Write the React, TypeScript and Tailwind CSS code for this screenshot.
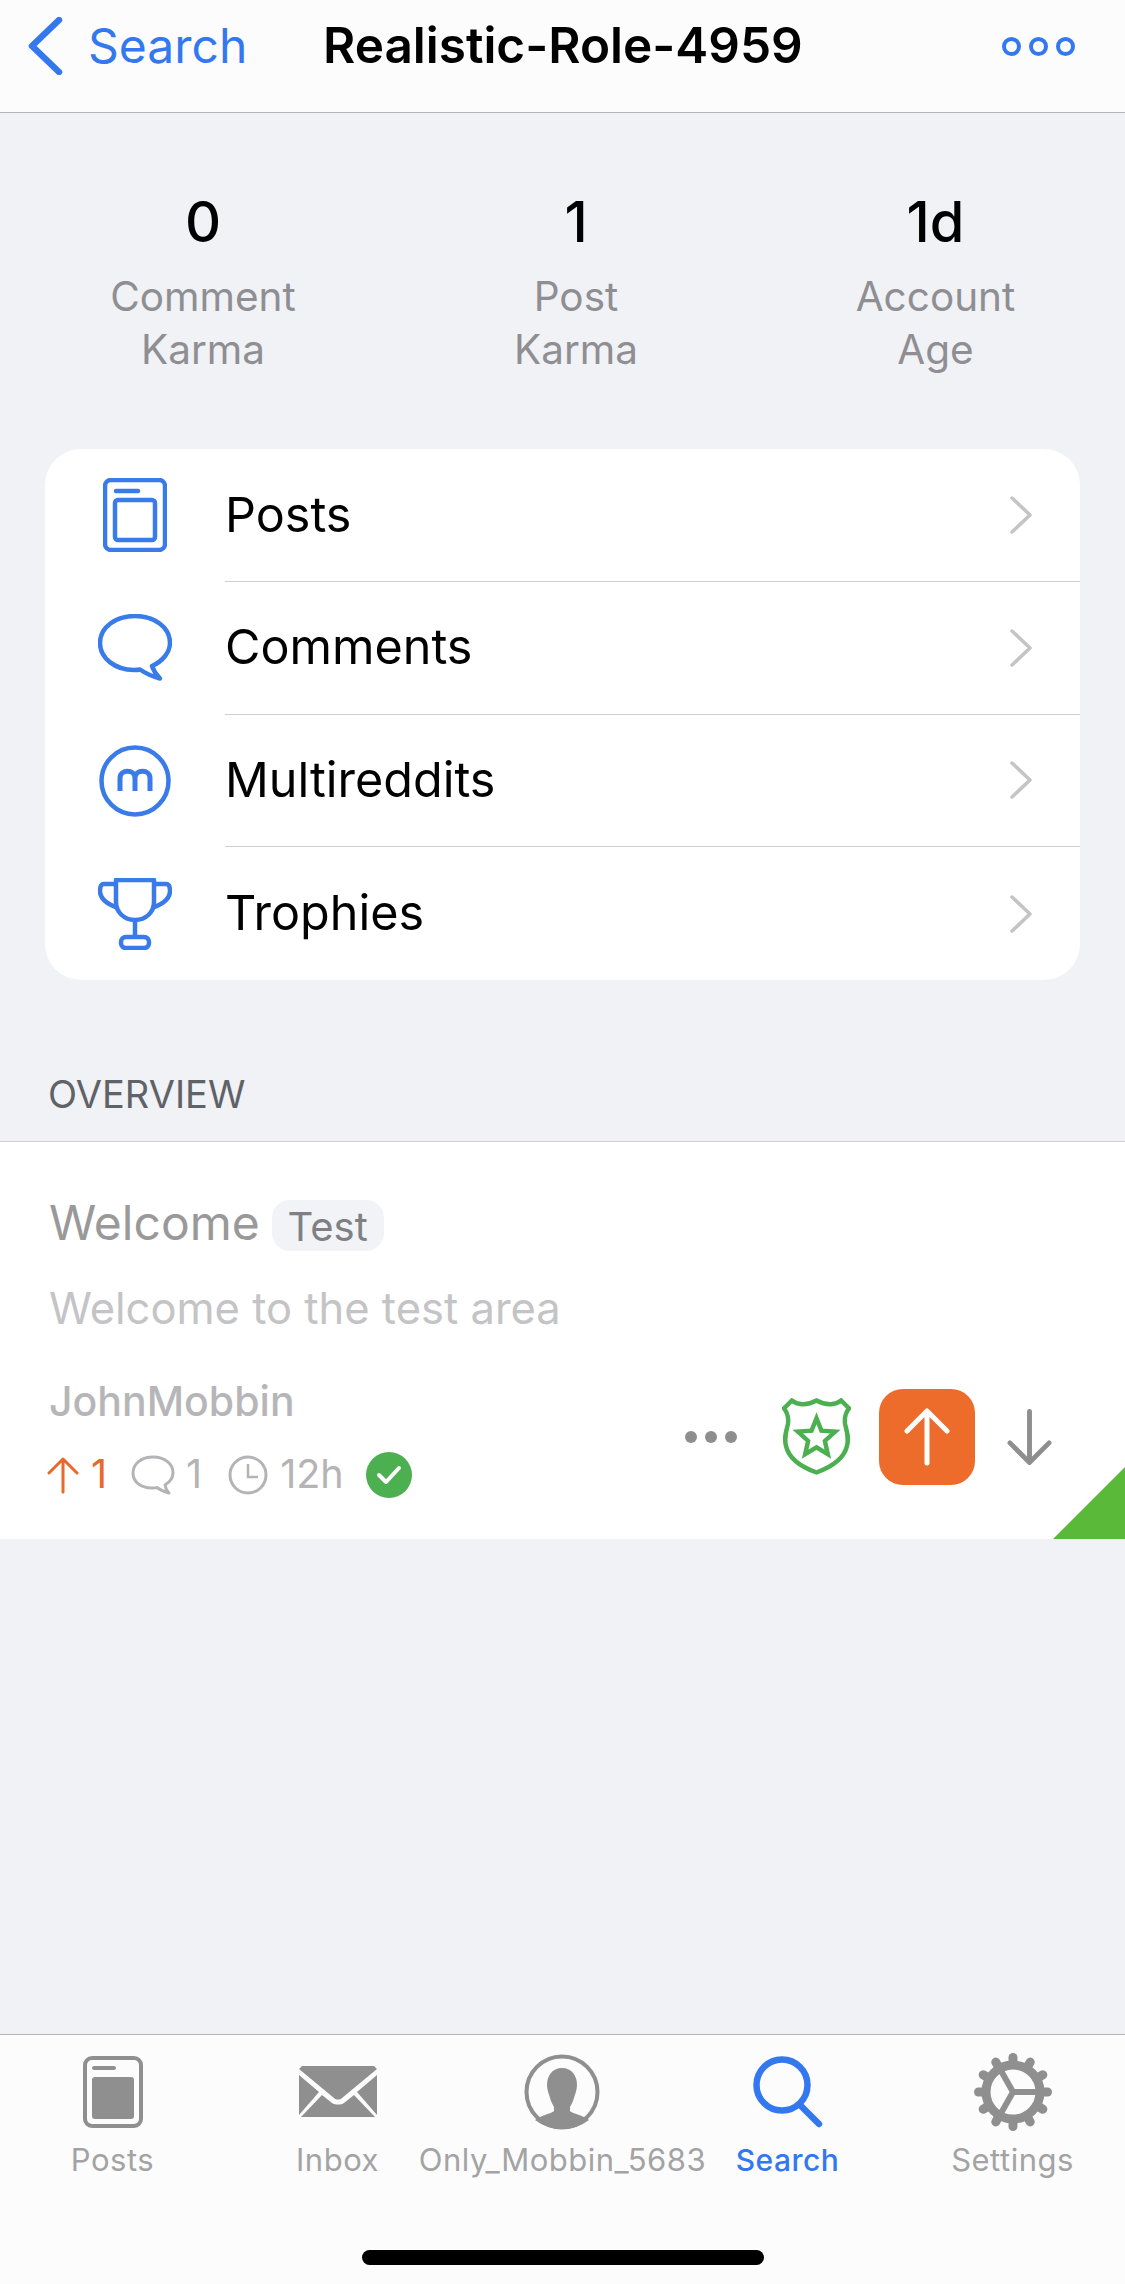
import type { ReactNode } from "react";

const font = "font-['Inter','Liberation_Sans',sans-serif]";

function PostsIcon() {
  return (
    <svg width="64" height="74" viewBox="0 0 64 74" fill="none" stroke="#3a7bea" strokeWidth="4.500">
      <rect x="2" y="2" width="60" height="70" rx="6" />
      <rect x="12" y="22" width="40" height="40" rx="3" />
      <path d="M13 13h22" strokeLinecap="round" />
    </svg>
  );
}

function CommentIcon() {
  return (
    <svg width="74" height="68" viewBox="0 0 74 68" fill="none" stroke="#3a7bea" strokeWidth="4.500">
      <path
        d="M37 2C18 2 2 13 2 29c0 15 15 27 34 27 3 0 4 0 6-.5 5 3.500 11 6.500 20 9-4-4-6.500-8-8-12.500C65 47 72 38 72 29 72 13 56 2 37 2Z"
        strokeLinejoin="round"
      />
    </svg>
  );
}

function MultiIcon() {
  return (
    <svg width="72" height="72" viewBox="0 0 72 72" fill="none" stroke="#3a7bea">
      <circle cx="36" cy="36" r="33.500" strokeWidth="4.500" />
      <path d="M21 46V33c0-9 15-9 15 0v13M36 33c0-9 15-9 15 0v13" strokeWidth="5" />
    </svg>
  );
}

function TrophyIcon() {
  return (
    <svg width="74" height="72" viewBox="0 0 74 72" fill="none" stroke="#3a7bea" strokeWidth="4.500" strokeLinejoin="round">
      <path d="M18 2h38v22c0 10-8 18-19 18s-19-8-19-18V2Z" />
      <path d="M18 6H6C2 6 2 10 2 13c0 8 7 13 18 17M56 6h12c4 0 4 4 4 7 0 8-7 13-18 17" />
      <path d="M37 42v17" />
      <rect x="23" y="59" width="28" height="11" rx="5" />
    </svg>
  );
}

function Chevron() {
  return (
    <svg width="24" height="40" viewBox="0 0 24 40" fill="none" stroke="#c4c4c7" strokeWidth="3.500" strokeLinecap="round" strokeLinejoin="round">
      <path d="M3 3l18 17L3 37" />
    </svg>
  );
}

function Row({ icon, label, last }: { icon: ReactNode; label: string; last?: boolean }) {
  return (
    <div className="flex h-[133px] items-stretch">
      <div className="flex w-[180px] shrink-0 items-center justify-center">{icon}</div>
      <div className={`flex flex-1 items-center justify-between pr-[47px] ${last ? "" : "border-b border-[#cfcfd2]"}`}>
        <span className="text-[48.500px] leading-none text-black">{label}</span>
        <Chevron />
      </div>
    </div>
  );
}

function Stat({ value, lines }: { value: string; lines: string[] }) {
  return (
    <div className="flex flex-col items-center">
      <div className="h-[60px] text-[56px] font-medium leading-[60px] text-black">{value}</div>
      <div className="mt-[18px] text-center text-[40.500px] leading-[53px] text-[#8e8e93]">
        {lines.map((l) => (
          <div key={l}>{l}</div>
        ))}
      </div>
    </div>
  );
}

function Tab({ icon, label, active }: { icon: ReactNode; label: string; active?: boolean }) {
  return (
    <div className="flex flex-col items-center">
      <div className="flex h-[80px] items-center justify-center">{icon}</div>
      <span
        className={`mt-[10px] whitespace-nowrap leading-[36px] ${
          active ? "text-[30px] font-medium tracking-[0.5px] text-[#3478f0]" : "text-[31px] tracking-[0.5px] text-[#a3a3a3]"
        }`}
      >
        {label}
      </span>
    </div>
  );
}

function GearIcon() {
  const teeth = [0, 30, 60, 90, 120, 150, 180, 210, 240, 270, 300, 330];
  return (
    <svg width="80" height="80" viewBox="0 0 80 80" fill="none">
      {teeth.map((a) => (
        <rect key={a} x="35.500" y="1" width="9" height="16" rx="4.500" fill="#8f8f8f" transform={`rotate(${a} 40 40)`} />
      ))}
      <circle cx="40" cy="40" r="27" stroke="#8f8f8f" strokeWidth="9" />
      <path d="M40 40h26M40 40L27 17M40 40L27 63" stroke="#8f8f8f" strokeWidth="6" />
    </svg>
  );
}

export default function App() {
  return (
    <div className={`flex h-[2284px] w-[1125px] flex-col overflow-hidden bg-[#f1f2f6] ${font}`}>
      {/* nav bar */}
      <header className="flex h-[113px] shrink-0 items-start border-b border-[#b4b4b6] bg-[#fcfcfd]">
        <div className="flex h-[92px] w-full items-center">
          <svg className="ml-[27px]" width="36" height="58" viewBox="0 0 36 58" fill="none" stroke="#3478f0" strokeWidth="6.500" strokeLinecap="round" strokeLinejoin="round">
            <path d="M32 3L5 29l27 26" />
          </svg>
          <span className="ml-[25px] w-[235px] text-[48px] leading-none text-[#3478f0]">Search</span>
          <span className="whitespace-nowrap text-[49.500px] font-semibold leading-none text-black">Realistic-Role-4959</span>
          <div className="ml-auto mr-[50px] flex gap-[8px]">
            <span className="h-[19px] w-[19px] rounded-full border-[4px] border-[#3478f0]" />
            <span className="h-[19px] w-[19px] rounded-full border-[4px] border-[#3478f0]" />
            <span className="h-[19px] w-[19px] rounded-full border-[4px] border-[#3478f0]" />
          </div>
        </div>
      </header>

      {/* stats */}
      <section className="grid shrink-0 grid-cols-[406px_340px_379px] pt-[79px]">
        <Stat value="0" lines={["Comment", "Karma"]} />
        <Stat value="1" lines={["Post", "Karma"]} />
        <Stat value="1d" lines={["Account", "Age"]} />
      </section>

      {/* menu card */}
      <section className="mx-[45px] mt-[73px] flex h-[531px] shrink-0 flex-col overflow-hidden rounded-[36px] bg-white">
        <Row icon={<PostsIcon />} label="Posts" />
        <Row icon={<CommentIcon />} label="Comments" />
        <Row icon={<MultiIcon />} label="Multireddits" />
        <Row icon={<TrophyIcon />} label="Trophies" last />
      </section>

      <div className="shrink-0 border-b border-[#cfcfd2] pb-[24px] pl-[48px] pt-[91px] text-[38px] leading-[46px] text-[#5f6266]">
        OVERVIEW
      </div>

      {/* post */}
      <article className="relative flex h-[397px] shrink-0 justify-between overflow-hidden bg-white pl-[49px]">
        <div className="flex flex-col pt-[58px]">
          <div className="flex h-[51px] items-center gap-[12px]">
            <span className="-mt-[6px] text-[48px] leading-none text-[#999999]">Welcome</span>
            <span className="flex h-[51px] w-[112px] items-center justify-center rounded-[18px] bg-[#f2f3f6] pt-[2px] text-[40px] leading-none text-[#808084]">
              Test
            </span>
          </div>
          <p className="mt-[34px] whitespace-nowrap text-[43.500px] leading-[46px] text-[#c4c4c6]">Welcome to the test area</p>
          <p className="mt-[45px] text-[41px] font-medium leading-[50px] text-[#b6b6b8]">JohnMobbin</p>
          <div className="mt-[26px] flex h-[46px] items-center text-[39.500px] leading-none text-[#b4b4b6]">
            <svg className="-ml-[2px]" width="32" height="38" viewBox="0 0 32 38" fill="none" stroke="#e8692b" strokeWidth="3" strokeLinecap="round" strokeLinejoin="round">
              <path d="M16 36V3M2 17L16 3l14 14" />
            </svg>
            <span className="ml-[12px] text-[#e8692b]">1</span>
            <svg className="ml-[24px]" width="44" height="40" viewBox="0 0 44 40" fill="none" stroke="#b4b4b6" strokeWidth="3">
              <path d="M22 2C10 2 2 9 2 18c0 9 8 15 19 15 2 0 4 0 5-.5 3 2.500 7 4 12 5.500-2-2-3.500-5-4-8 5-3 8-7 8-12.500C42 9 34 2 22 2Z" strokeLinejoin="round" />
            </svg>
            <span className="ml-[11px]">1</span>
            <svg className="ml-[26px]" width="40" height="40" viewBox="0 0 40 40" fill="none" stroke="#b4b4b6" strokeWidth="3">
              <circle cx="20" cy="20" r="18" />
              <path d="M20 9v13h10" strokeWidth="2.500" />
            </svg>
            <span className="ml-[12px]">12h</span>
            <span className="ml-[22px] flex h-[46px] w-[46px] items-center justify-center rounded-full bg-[#4caf50]">
              <svg width="26" height="20" viewBox="0 0 26 20" fill="none" stroke="#ffffff" strokeWidth="4" strokeLinecap="round" strokeLinejoin="round">
                <path d="M3 10l7 7L23 3" />
              </svg>
            </span>
          </div>
        </div>

        <div className="flex items-center self-end pb-[54px] pr-[73px]">
          <div className="flex gap-[8px]">
            <span className="h-[12px] w-[12px] rounded-full bg-[#8e8e8e]" />
            <span className="h-[12px] w-[12px] rounded-full bg-[#8e8e8e]" />
            <span className="h-[12px] w-[12px] rounded-full bg-[#8e8e8e]" />
          </div>
          <svg className="ml-[45px]" width="69" height="78" viewBox="0 0 70 78" fill="none" stroke="#4caf50" strokeWidth="4.500">
            <path d="M10 2L2 10c4 5 5 9 4 16-2 8-4 14-2 22 3 13 17 22 31 27 14-5 28-14 31-27 2-8 0-14-2-22-1-7 0-11 4-16l-8-8c-5 4-14 6-25 0C24 8 15 6 10 2Z" strokeLinejoin="miter" />
            <path d="M35 20l5 12.500L54 33.500 43.500 43l3 13.500L35 49.500 23.500 56.500l3-13.500L16 33.500l14-1Z" strokeWidth="4.500" />
          </svg>
          <div className="ml-[28px] flex h-[96px] w-[96px] items-center justify-center rounded-[24px] bg-[#ed6c2c]">
            <svg width="46" height="58" viewBox="0 0 46 58" fill="none" stroke="#ffffff" strokeWidth="5" strokeLinecap="round" strokeLinejoin="round">
              <path d="M23 55V3M3 23L23 3l20 20" />
            </svg>
          </div>
          <svg className="ml-[32px]" width="45" height="58" viewBox="0 0 46 58" fill="none" stroke="#8e8e8e" strokeWidth="5" strokeLinecap="round" strokeLinejoin="round">
            <path d="M23 3v52M3 35l20 20 20-20" />
          </svg>
        </div>

        {/* corner flag */}
        <div className="absolute bottom-0 right-0 h-[72px] w-[72px] bg-[#5ab938] [clip-path:polygon(100%_0,100%_100%,0_100%)]" />
      </article>

      <div className="flex-1" />

      {/* tab bar */}
      <footer className="flex h-[250px] shrink-0 flex-col border-t border-[#b4b4b6] bg-[#fcfcfc]">
        <nav className="grid grid-cols-5 pt-[17px]">
          <Tab
            label="Posts"
            icon={
              <svg width="60" height="72" viewBox="0 0 60 72" fill="none">
                <rect x="2" y="2" width="56" height="68" rx="7" stroke="#8f8f8f" strokeWidth="4" />
                <rect x="9" y="21" width="42" height="42" rx="3" fill="#8f8f8f" />
                <path d="M11 12h20" stroke="#8f8f8f" strokeWidth="4" strokeLinecap="round" />
              </svg>
            }
          />
          <Tab
            label="Inbox"
            icon={
              <svg width="78" height="52" viewBox="0 0 78 52" fill="#8f8f8f">
                <path d="M3 0h72l3 3-35 29c-2 2-6 2-8 0L0 3Z" />
                <path d="M0 9l20 17L0 49Z" />
                <path d="M78 9L58 26l20 23Z" />
                <path d="M23 29l10 8c3 2 9 2 12 0l10-8 21 22H2Z" />
              </svg>
            }
          />
          <Tab
            label="Only_Mobbin_5683"
            icon={
              <svg className="-ml-[2px]" width="76" height="76" viewBox="0 0 76 76" fill="none">
                <circle cx="38" cy="38" r="35.500" stroke="#8f8f8f" strokeWidth="4" />
                <path
                  d="M38 14c-10 0-15 8-15 17 0 5 2 9 3 13 1 4 3 7 4 9v4c-3 3-13 4-19 9 8 6 17 9 27 9s19-3 27-9c-6-5-16-6-19-9v-4c1-2 3-5 4-9 1-4 3-8 3-13 0-9-5-17-15-17Z"
                  fill="#8f8f8f"
                />
              </svg>
            }
          />
          <Tab
            label="Search"
            active
            icon={
              <svg width="70" height="72" viewBox="0 0 70 72" fill="none" stroke="#3478f0" strokeWidth="6.500" strokeLinecap="round">
                <circle cx="29" cy="29" r="25.500" />
                <path d="M47 49l19 19" />
              </svg>
            }
          />
          <Tab label="Settings" icon={<GearIcon />} />
        </nav>
        <div className="mx-auto mt-[72px] h-[15px] w-[402px] rounded-full bg-black" />
      </footer>
    </div>
  );
}
